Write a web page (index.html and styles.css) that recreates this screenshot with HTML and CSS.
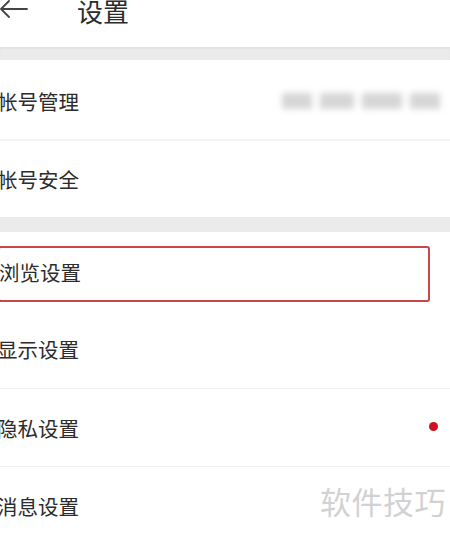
FILE: index.html
```html
<!DOCTYPE html>
<html lang="zh">
<head>
<meta charset="utf-8">
<title>设置</title>
<link rel="stylesheet" href="styles.css">
</head>
<body>
<div class="page">
  <header class="topbar">
    <svg class="back" width="30" height="22" viewBox="0 0 30 22">
      <path d="M28 9H2M10 1L2 9l8 8" fill="none" stroke="#444" stroke-width="1.8" stroke-linecap="round" stroke-linejoin="round"/>
    </svg>
    <h1 class="title">设置</h1>
  </header>
  <div class="band band-top"></div>
  <div class="row row-1 divided">
    <span class="label">帐号管理</span>
    <span class="blurred"><i class="b1"></i><i class="b2"></i><i class="b3"></i><i class="b4"></i></span>
  </div>
  <div class="row row-2">
    <span class="label">帐号安全</span>
  </div>
  <div class="band band-mid"></div>
  <div class="row row-3">
    <div class="highlight"><span class="label">浏览设置</span></div>
  </div>
  <div class="row row-4 thin">
    <span class="label">显示设置</span>
  </div>
  <div class="row row-5 thin">
    <span class="label">隐私设置</span>
    <span class="dot"></span>
  </div>
  <div class="row row-6">
    <span class="label">消息设置</span>
  </div>
  <div class="watermark">软件技巧</div>
</div>
</body>
</html>
```
FILE: styles.css
```css
* { box-sizing: border-box; margin: 0; padding: 0; }
html, body { width: 450px; height: 535px; overflow: hidden; background: #fff; }
body { font-family: "Noto Sans CJK SC", "Noto Sans", sans-serif; color: #2c2c2c; }
.page { position: relative; width: 450px; height: 535px; overflow: hidden; display: flex; flex-direction: column; }

.topbar { height: 47px; flex: none; display: flex; align-items: flex-start; background: #fff; }
.back { display: block; margin-top: 0px; margin-left: -1px; }
.title { font-size: 26px; font-weight: 400; line-height: 26px; margin-left: 48px; margin-top: -2px; color: #2c2c2c; }

.band { flex: none; background: #ebebeb; }
.band-top { height: 13px; box-shadow: inset 0 2px 2px rgba(0,0,0,0.04); }
.band-mid { height: 15px; }

.row { flex: none; display: flex; align-items: center; background: #fff; position: relative; }
.label { font-size: 20.5px; line-height: 24px; margin-left: -3px; color: #2c2c2c; }
.row-1 { height: 81px; border-bottom: 2px solid #f3f3f3; padding-top: 2px; }
.row-2 { height: 76px; }
.row-3 { height: 78px; align-items: flex-start; padding-top: 14px; }
.row-4 { height: 79px; }
.row-5 { height: 78px; }
.row-6 { height: 78px; }
.thin { border-bottom: 1px solid #f1f1f1; }

.highlight { width: 432px; height: 56px; margin-left: -2px; border: 2px solid #c8484a; border-radius: 3px; display: flex; align-items: center; padding-bottom: 4px; }
.highlight .label { margin-left: -1px; }

.blurred { margin-left: auto; margin-right: 10px; display: flex; gap: 8px; align-items: center; filter: blur(3px); height: 26px; }
.blurred i { display: block; height: 16px; background: #d6d6d6; }
.blurred .b1 { width: 30px; }
.blurred .b2 { width: 34px; }
.blurred .b3 { width: 40px; }
.blurred .b4 { width: 30px; }

.dot { margin-left: auto; margin-right: 12px; width: 9px; height: 9px; border-radius: 50%; background: #d0101e; margin-top: -2px; }

.watermark { position: absolute; left: 320px; top: 483px; font-size: 31px; line-height: 36px; color: #d2d2d2; letter-spacing: 0.5px; }
```
